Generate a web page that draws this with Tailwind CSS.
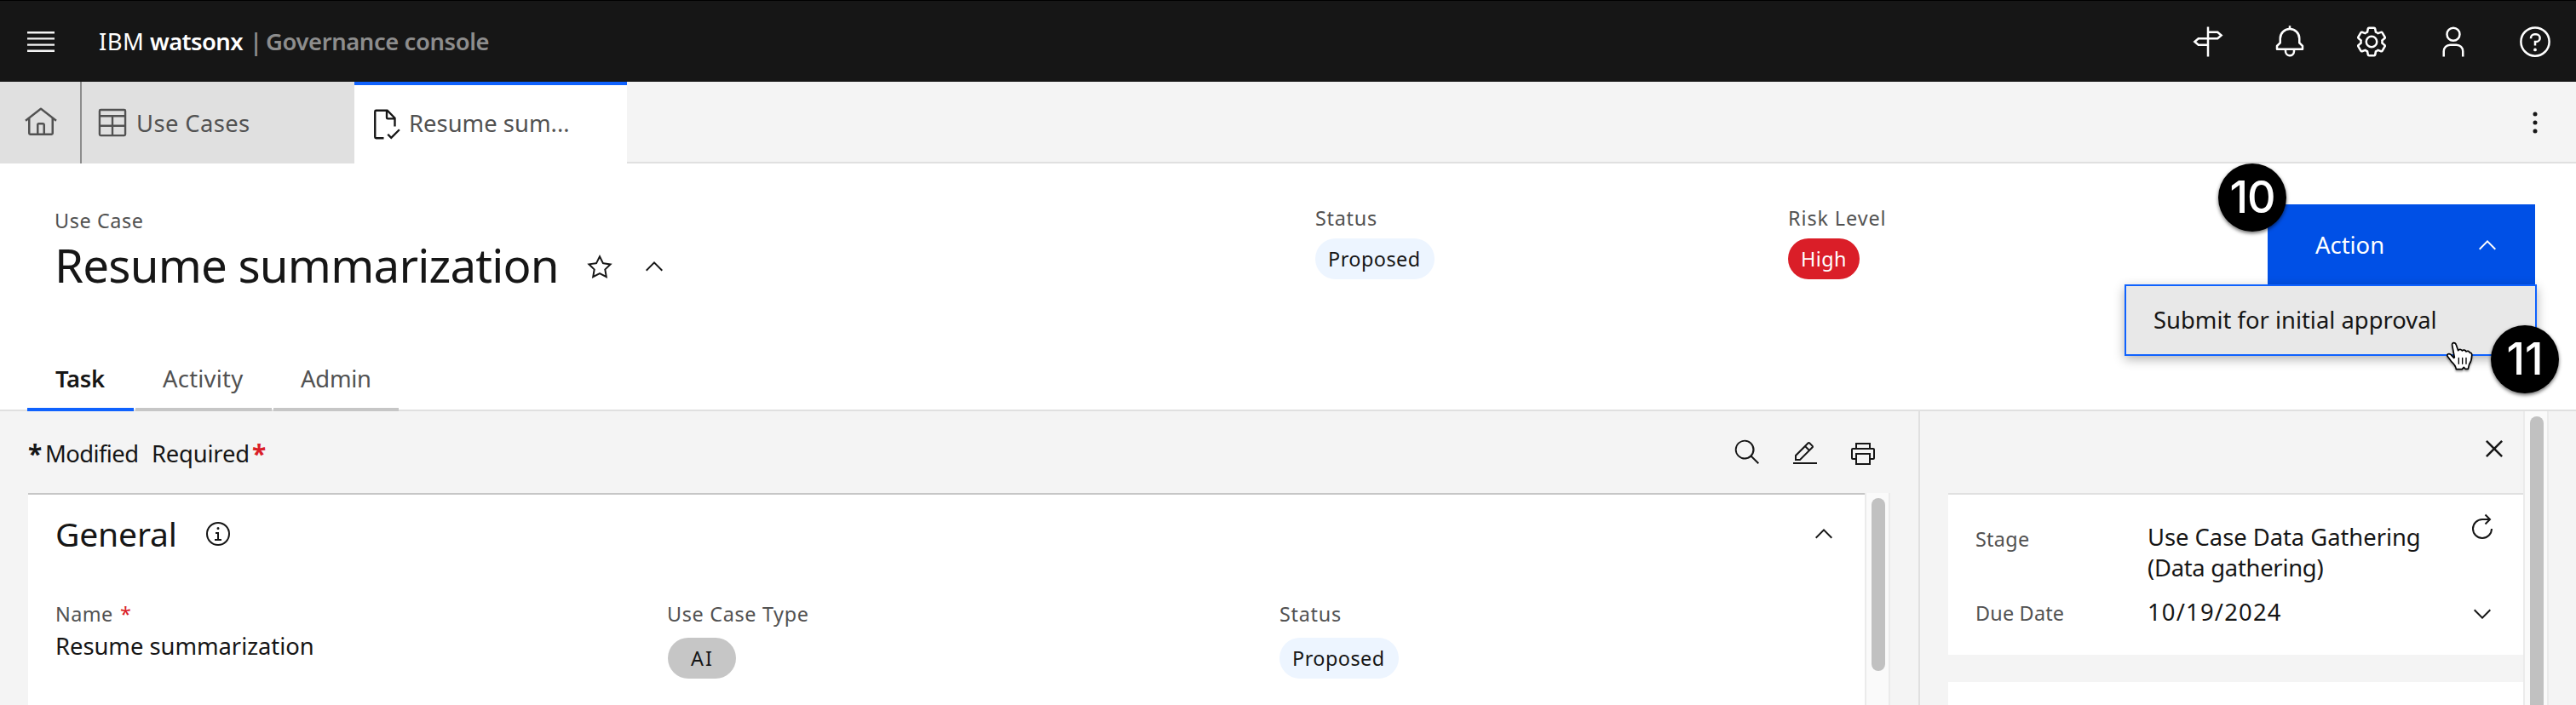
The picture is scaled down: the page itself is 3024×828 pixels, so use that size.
<!DOCTYPE html>
<html lang="en">
<head>
<meta charset="utf-8">
<title>IBM watsonx | Governance console</title>
<script src="https://cdn.jsdelivr.net/npm/@tailwindcss/browser@4"></script>
</head>
<body class="h-[828px] w-[3024px] overflow-hidden bg-white font-['Noto_Sans',sans-serif] text-[27.4px] text-[#161616]">

<!-- Global header -->
<header class="flex h-24 items-center border-t border-black bg-[#161616] pr-7 text-white">
  <svg class="ml-7 size-10 shrink-0" viewBox="0 0 40 40" fill="#f4f4f4"><path d="M4 8h32v2.400H4zM4 15.200h32v2.400H4zM4 22.400h32v2.400H4zM4 29.600h32V32H4z"/></svg>
  <div class="ml-[48px] flex leading-[94px] whitespace-nowrap">
    <span class="w-[60px] tracking-[0.48px]">IBM</span>
    <span class="w-[117px] font-semibold tracking-[-0.6px]">watsonx</span>
    <span class="w-[19px] font-semibold text-[#8d8d8d]">|</span>
    <span class="font-semibold tracking-[-0.4px] text-[#8d8d8d]">Governance console</span>
  </div>
  <nav class="ml-auto flex gap-14">
    <svg class="size-10" viewBox="0 0 32 32" fill="none" stroke="currentColor" stroke-width="2"><path d="M16 2v28M16 7h9l3.500 3-3.500 3h-9M16 19H7l-3.500-3L7 13h9"/></svg>
    <svg class="size-10" viewBox="0 0 32 32" fill="currentColor"><path d="M28.7071,19.293,26,16.5859V13a10.0136,10.0136,0,0,0-9-9.9492V1H15V3.0508A10.0136,10.0136,0,0,0,6,13v3.5859L3.2929,19.293A1,1,0,0,0,3,20v3a1,1,0,0,0,1,1h7v.7768a5.152,5.152,0,0,0,4.5,5.1987A5.0057,5.0057,0,0,0,21,25V24h7a1,1,0,0,0,1-1V20A1,1,0,0,0,28.7071,19.293ZM19,25a3,3,0,0,1-6,0V24h6Zm8-3H5V20.4141L7.707,17.707A1,1,0,0,0,8,17V13a8,8,0,0,1,16,0v4a1,1,0,0,0,.293.707L27,20.4141Z"/></svg>
    <svg class="size-10" viewBox="0 0 32 32" fill="currentColor"><path d="M27,16.76c0-.25,0-.5,0-.76s0-.51,0-.77l1.92-1.68A2,2,0,0,0,29.3,11L26.94,7a2,2,0,0,0-1.73-1,2,2,0,0,0-.64.1l-2.43.82a11.35,11.35,0,0,0-1.31-.75l-.51-2.52a2,2,0,0,0-2-1.61H13.64a2,2,0,0,0-2,1.61l-.51,2.52a11.48,11.48,0,0,0-1.32.75L7.43,6.06A2,2,0,0,0,6.79,6,2,2,0,0,0,5.06,7L2.7,11a2,2,0,0,0,.41,2.51L5,15.24c0,.25,0,.5,0,.76s0,.51,0,.77L3.11,18.45A2,2,0,0,0,2.7,21L5.06,25a2,2,0,0,0,1.73,1,2,2,0,0,0,.64-.1l2.43-.82a11.35,11.35,0,0,0,1.31.75l.51,2.52a2,2,0,0,0,2,1.61h4.72a2,2,0,0,0,2-1.61l.51-2.52a11.48,11.48,0,0,0,1.32-.75l2.42.82a2,2,0,0,0,.64.1,2,2,0,0,0,1.73-1L29.3,21a2,2,0,0,0-.41-2.51ZM25.21,24l-3.43-1.16a8.86,8.86,0,0,1-2.71,1.57L18.36,28H13.64l-.71-3.55a9.36,9.36,0,0,1-2.7-1.57L6.79,24,4.43,20l2.72-2.4a8.9,8.9,0,0,1,0-3.13L4.43,12,6.79,8l3.43,1.16a8.86,8.86,0,0,1,2.71-1.57L13.64,4h4.72l.71,3.55a9.36,9.36,0,0,1,2.7,1.57L25.21,8,27.57,12l-2.72,2.4a8.9,8.9,0,0,1,0,3.13L27.57,20Z"/><path d="M16,22a6,6,0,1,1,6-6A5.94,5.94,0,0,1,16,22Zm0-10a3.91,3.91,0,0,0-4,4,3.91,3.91,0,0,0,4,4,3.91,3.91,0,0,0,4-4A3.91,3.91,0,0,0,16,12Z"/></svg>
    <svg class="size-10" viewBox="0 0 32 32" fill="currentColor"><path d="M16 4a5 5 0 1 1-5 5 5 5 0 0 1 5-5m0-2a7 7 0 1 0 7 7A7 7 0 0 0 16 2zM26 30H24V25a5 5 0 0 0-5-5H13a5 5 0 0 0-5 5v5H6V25a7 7 0 0 1 7-7h6a7 7 0 0 1 7 7z"/></svg>
    <svg class="size-10" viewBox="0 0 32 32" fill="currentColor"><circle cx="16" cy="16" r="13.300" fill="none" stroke="currentColor" stroke-width="2"/><circle cx="16" cy="23.500" r="1.500"/><path d="M17 8h-1.500A4.490 4.490 0 0 0 11 12.500V13h2v-.5A2.500 2.500 0 0 1 15.500 10H17a2.500 2.500 0 0 1 0 5H15v4.500h2V17a4.500 4.500 0 0 0 0-9z"/></svg>
  </nav>
</header>

<!-- Open tabs -->
<div class="flex h-24 bg-[#f4f4f4] text-[#525252]">
  <div class="flex w-24 items-center border-r-2 border-[#8d8d8d] bg-[#e0e0e0] pl-7">
    <svg class="size-10 shrink-0" viewBox="0 0 32 32" fill="currentColor"><path d="M16.6123,2.2138a1.01,1.01,0,0,0-1.2427,0L1,13.4194l1.2427,1.5717L4,13.6208V26a2.0041,2.0041,0,0,0,2,2H26a2.0037,2.0037,0,0,0,2-2V13.63L29.7573,15,31,13.4282ZM18,26H14V18h4Zm2,0V18a2.0023,2.0023,0,0,0-2-2H14a2.002,2.002,0,0,0-2,2v8H6V12.0615l10-7.79,10,7.8005V26Z"/></svg>
  </div>
  <div class="flex w-80 items-center bg-[#e0e0e0] pl-4">
    <svg class="size-10 shrink-0" viewBox="0 0 32 32" fill="none" stroke="currentColor" stroke-width="1.900"><rect x="3.950" y="3.950" width="24.100" height="24.100" rx="1"/><path d="M4 9.800h24M4 19h24M16 9.800V28"/></svg>
    <span class="ml-[8px] leading-[95px] tracking-[0.38px] whitespace-nowrap">Use Cases</span>
  </div>
  <div class="flex w-80 items-center border-t-4 border-[#0f62fe] bg-white pb-1 pl-[18px]">
    <svg class="mt-1 size-10 shrink-0 text-[#161616]" viewBox="0 0 32 32" fill="none" stroke="currentColor" stroke-width="1.900"><path d="M13.200 29H6a1 1 0 0 1-1-1V4a1 1 0 0 1 1-1h10.500l7.100 7.100V18M16 3v6.700a1 1 0 0 0 1 1h6.600M17 25.400l3.200 3.300 7.700-7.700"/></svg>
    <span class="ml-[6px] leading-[87px] tracking-[0.02px] whitespace-nowrap">Resume sum...</span>
  </div>
  <div class="flex flex-1 items-center justify-end border-b-2 border-[#e0e0e0] pt-[2px] pr-7 text-[#161616]">
    <svg class="size-10" viewBox="0 0 32 32" fill="currentColor"><circle cx="16" cy="8" r="2"/><circle cx="16" cy="16" r="2"/><circle cx="16" cy="24" r="2"/></svg>
  </div>
</div>

<!-- Object header -->
<section class="relative h-[291px] bg-white">
  <div class="flex h-[213px]">
    <div class="w-[1544px] pt-[51px] pl-[64px]">
      <div class="text-[23.4px] leading-8 tracking-[0.59px] text-[#525252]">Use Case</div>
      <div class="flex">
        <h1 class="w-[624px] text-[54.7px] leading-[72px] tracking-[-0.8px] whitespace-nowrap">Resume summarization</h1>
        <svg class="mt-[22px] size-8" viewBox="0 0 32 32" fill="currentColor"><path d="M16,6.52l2.76,5.58.46,1,1,.15,6.16.89L22,18.44l-.75.73.18,1,1.05,6.13-5.51-2.89L16,23l-.93.49L9.56,26.34l1-6.13.18-1L10,18.44,5.58,14.09l6.16-.89,1-.15.46-1L16,6.52M16,2l-4.55,9.22L1.28,12.69l7.36,7.18L6.9,30,16,25.22,25.1,30,23.36,19.87l7.36-7.17L20.55,11.22Z"/></svg>
        <svg class="mt-[22px] ml-8 size-8" viewBox="0 0 32 32" fill="currentColor"><path d="M16 10 26 20 24.600 21.400 16 12.800 7.400 21.400 6 20z"/></svg>
      </div>
    </div>
    <div class="w-[555px] pt-12 text-[23.4px]">
      <div class="leading-8 tracking-[0.72px] text-[#525252]">Status</div>
      <div class="mt-2 h-12 w-[140px] rounded-full bg-[#edf5ff] pl-[15px] leading-[48px] tracking-[0.48px]">Proposed</div>
    </div>
    <div class="w-[563px] pt-12 text-[23.4px]">
      <div class="leading-8 tracking-[0.9px] text-[#525252]">Risk Level</div>
      <div class="mt-2 h-12 w-[84px] rounded-full bg-[#da1e28] pl-[15px] leading-[48px] tracking-[0.39px] text-white">High</div>
    </div>
    <button class="mt-12 flex h-24 w-[314px] items-start justify-between bg-[#0050e6] pr-10 pl-[56px] text-white">
      <span class="leading-[95px]">Action</span>
      <svg class="mt-8 size-8" viewBox="0 0 32 32" fill="currentColor"><path d="M16 10 26 20 24.600 21.400 16 12.800 7.400 21.400 6 20z"/></svg>
    </button>
  </div>
  <div class="flex h-[78px] gap-[2px] border-b-2 border-[#e0e0e0] pl-8 leading-[80px] text-[#525252]">
    <div class="-mb-[2px] w-[125px] border-b-4 border-[#0f62fe] pl-[33px] font-semibold tracking-[-0.3px] text-[#161616]">Task</div>
    <div class="-mb-[2px] w-[160px] border-b-4 border-[#c6c6c6] pl-[32px] tracking-[0.24px]">Activity</div>
    <div class="-mb-[2px] w-[147px] border-b-4 border-[#c6c6c6] pl-[32px] tracking-[-0.23px]">Admin</div>
  </div>

  <!-- Open action menu -->
  <div class="absolute top-[142px] left-[2494px] h-[84px] w-[484px] border-2 border-[#0f62fe] bg-[#e8e8e8] pl-[32px] leading-[80px] whitespace-nowrap shadow-[0_4px_12px_rgba(0,0,0,0.3)]">Submit for initial approval</div>

  <!-- Numbered callouts -->
  <div class="absolute top-0 left-[2604px] flex size-20 justify-center rounded-full bg-black font-['Inter',sans-serif] text-[52px] leading-[80px] font-medium tracking-[-1px] text-white shadow-[0_2px_4px_rgba(0,0,0,0.6)]">10</div>
  <div class="absolute top-[190px] left-[2924px] flex size-20 justify-center rounded-full bg-black font-['Inter',sans-serif] text-[52px] leading-[80px] font-medium text-white shadow-[0_2px_4px_rgba(0,0,0,0.6)]">11</div>

  <!-- Hand pointer -->
  <svg class="absolute top-[208px] left-[2870px] h-[38px] w-[34px] drop-shadow-[0_2px_1px_rgba(0,0,0,0.35)]" viewBox="60 60 102 114" stroke="#000" stroke-width="5" stroke-linejoin="round" stroke-linecap="round">
    <path fill="#fff" d="M86 76C84 66 97 65 100 75L107 95C110 89 118 90 121 96C125 91 133 93 135 99C139 95 146 97 148 103C153 102 156 106 155 113C155 125 152 135 146 144L142 160L132 160L127 154L121 161L100 161C98 148 90 140 83 134C78 126 73 121 69 115C67 108 74 104 81 109L92 121L94 119Z"/>
    <path fill="none" stroke-width="4" d="M109 121v21M122 121v21M135 121v21"/>
  </svg>
</section>

<!-- Body -->
<div class="flex h-[345px] bg-[#f4f4f4]">
  <main class="w-[2252px]">
    <div class="flex h-24 items-start pr-[49px] pl-[33px] leading-[100px]">
      <span class="w-5 text-[30px] font-bold">*</span>
      <span class="w-[125px] tracking-[-0.59px]">Modified</span>
      <span class="w-[118px] tracking-[-0.2px]">Required</span>
      <span class="text-[30px] font-bold text-[#da1e28]">*</span>
      <div class="ml-auto flex gap-9">
        <svg class="mt-8 size-8" viewBox="0 0 32 32" fill="currentColor"><path d="M30,28.600l-8.100-8.100a11.400,11.400,0,1,0-1.400,1.400L28.600,30ZM3.600,13a9.400,9.400,0,1,1,9.400,9.400A9.400,9.400,0,0,1,3.600,13Z"/></svg>
        <svg class="mt-[34px] size-8" viewBox="0 0 32 32" fill="currentColor"><path d="M2 26H30V28H2zM25.400 9c.8-.8.8-2 0-2.800l-3.600-3.600c-.8-.8-2-.8-2.800 0l-15 15V24h6.400L25.400 9zM20.400 4L24 7.600l-3 3L17.400 7 20.400 4zM6 22v-3.600l10-10 3.600 3.600-10 10H6z"/></svg>
        <svg class="mt-[34px] size-8" viewBox="0 0 32 32" fill="currentColor"><path d="M28,9H25V3H7V9H4a2,2,0,0,0-2,2V21a2,2,0,0,0,2,2H7v6H25V23h3a2,2,0,0,0,2-2V11A2,2,0,0,0,28,9ZM9,5H23V9H9ZM23,27H9V17H23Zm5-6H25V15H7v6H4V11H28Z"/></svg>
      </div>
    </div>
    <div class="flex h-[249px] pl-[33px]">
      <section class="w-[2156px] border-t-2 border-[#c6c6c6] bg-white pt-5">
        <div class="flex h-[52px] items-center pr-8 pl-[32px]">
          <h2 class="w-[175px] text-[39.1px] leading-[52px] tracking-[-0.2px]">General</h2>
          <svg class="size-8" viewBox="0 0 32 32" fill="currentColor"><circle cx="16" cy="16" r="13" fill="none" stroke="currentColor" stroke-width="2"/><path d="M17 22V14H13v2h2v6H12v2h8V22zM16 8a1.500 1.500 0 1 0 1.500 1.500A1.500 1.500 0 0 0 16 8z"/></svg>
          <svg class="ml-auto size-8" viewBox="0 0 32 32" fill="currentColor"><path d="M16 10 26 20 24.600 21.400 16 12.800 7.400 21.400 6 20z"/></svg>
        </div>
        <div class="mt-[52px] grid grid-cols-[718px_718px_1fr] pl-[33px] text-[23.4px]">
          <div class="-ml-px">
            <div class="flex leading-8 text-[#525252]"><span class="w-[76px] tracking-[0.38px]">Name</span><span class="text-[#da1e28]">*</span></div>
            <div class="mt-1 text-[27.4px] leading-9 tracking-[-0.04px]">Resume summarization</div>
          </div>
          <div>
            <div class="-ml-px leading-8 tracking-[0.66px] text-[#525252]">Use Case Type</div>
            <div class="mt-3 h-12 w-20 rounded-full bg-[#c6c6c6] pl-[27px] leading-[48px] tracking-[2px]">AI</div>
          </div>
          <div>
            <div class="leading-8 tracking-[0.72px] text-[#525252]">Status</div>
            <div class="mt-3 h-12 w-[140px] rounded-full bg-[#edf5ff] pl-[15px] leading-[48px] tracking-[0.48px]">Proposed</div>
          </div>
        </div>
      </section>
      <div class="w-[30px] border-r-2 border-l-2 border-[#ebebeb] bg-[#fafafa] pt-[6px] pl-[6px]">
        <div class="h-[203px] w-4 rounded-full bg-[#c1c1c1]"></div>
      </div>
    </div>
  </main>

  <aside class="w-[710px] border-l-2 border-[#e0e0e0] pl-[33px]">
    <div class="flex h-24 justify-end pt-6 pr-[14px]">
      <svg class="size-10" viewBox="0 0 32 32" fill="currentColor"><path d="M17.4141 16 24 9.4141 22.5859 8 16 14.5859 9.4143 8 8 9.4141 14.5859 16 8 22.5859 9.4143 24 16 17.4141 22.5859 24 24 22.5859z"/></svg>
    </div>
    <div class="flex h-[190px] border-t-2 border-[#e0e0e0] bg-white pt-8 pl-8">
      <div class="w-[202px] pt-[2px] text-[23.4px] leading-9 text-[#525252]">
        <div class="tracking-[0.28px]">Stage</div>
        <div class="mt-[51px] tracking-[0.2px]">Due Date</div>
      </div>
      <div class="w-[377px] leading-9">
        <div class="tracking-[-0.04px]">Use Case Data Gathering</div>
        <div class="tracking-[-0.28px]">(Data gathering)</div>
        <div class="mt-4 tracking-[1.2px]">10/19/2024</div>
      </div>
      <div class="flex w-8 flex-col">
        <svg class="-mt-[10px] ml-[2px] size-8" viewBox="0 0 32 32" fill="none" stroke="currentColor" stroke-width="2"><path d="M25 18a11 11 0 1 1-11-11h8M17.500 1.500l5.500 5.500-5.500 5.500"/></svg>
        <svg class="mt-[70px] size-8" viewBox="0 0 32 32" fill="currentColor"><path d="M16 22 6 12 7.400 10.600 16 19.200 24.600 10.600 26 12z"/></svg>
      </div>
    </div>
    <div class="mt-8 h-[27px] bg-white"></div>
  </aside>
  <div class="w-[30px] overflow-hidden border-r-2 border-l-2 border-[#ebebeb] bg-[#fafafa] pt-[6px] pl-[6px]">
    <div class="h-[339px] w-4 rounded-t-full bg-[#c1c1c1]"></div>
  </div>
</div>
</body>
</html>
